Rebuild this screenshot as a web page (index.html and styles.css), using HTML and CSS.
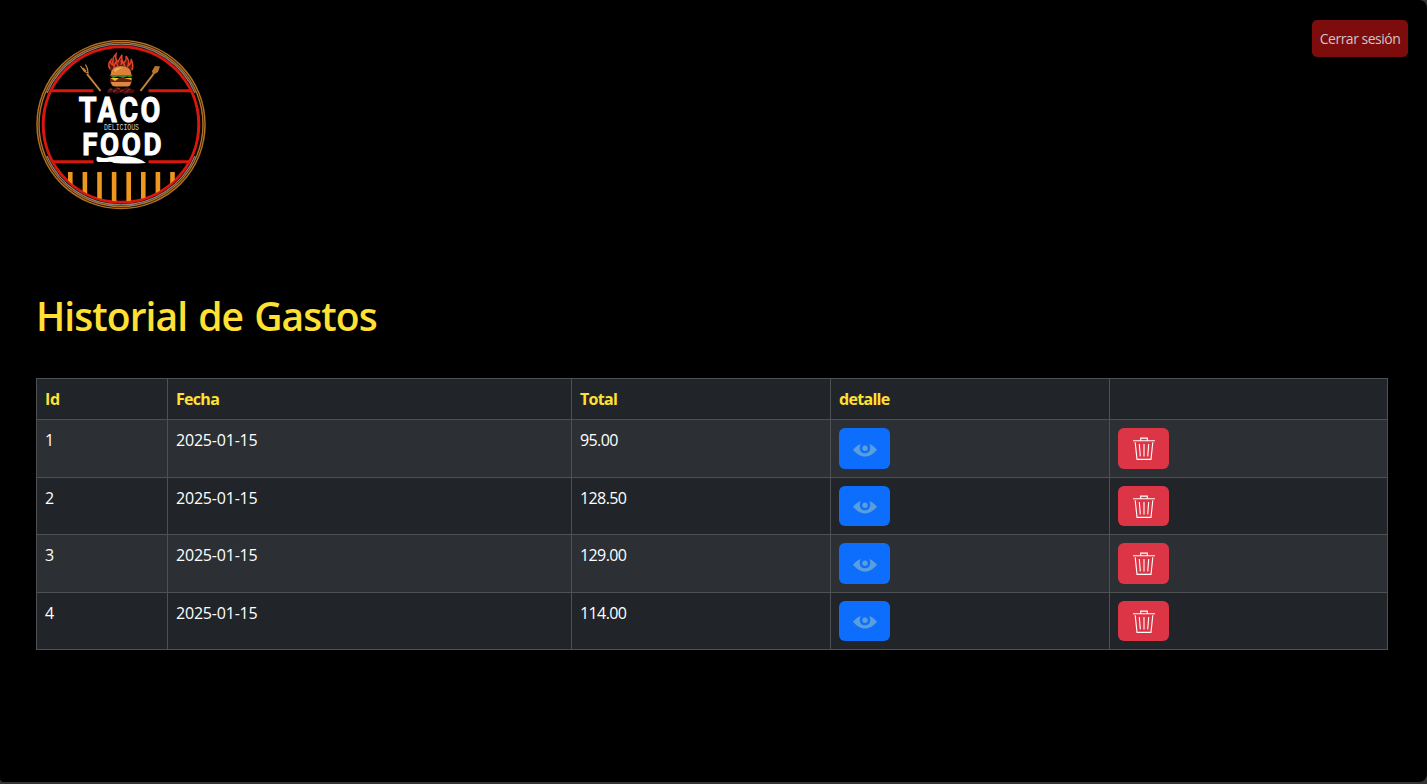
FILE: index.html
```
<!DOCTYPE html>
<html lang="es">
<head>
<meta charset="utf-8">
<title>Historial de Gastos</title>
<link rel="stylesheet" href="styles.css">
</head>
<body>
<svg class="sprite" aria-hidden="true">
  <symbol id="eye" viewBox="0 0 24 14"><path d="M0 6.700C2.500 3.800 5.500 1.700 7.700.9C5.400 5.600 7.300 10.300 12 10.300S18.600 5.600 16.300.9C18.500 1.700 21.500 3.800 24 6.700C20.500 10.800 16.500 13.500 12 13.500S3.500 10.800 0 6.700Z"/><circle cx="12" cy="5.200" r="2.700"/></symbol>
  <symbol id="trash" viewBox="0 0 22 24"><path d="M0 3.700H22M7.700 3.500V1.100H14.300V3.500M2.200 5.300L4 22.400H18L19.800 5.300M6.300 7L7.300 19.400M11 7V19.400M15.700 7L14.700 19.400"/></symbol>
</svg>
<div class="page">
  <header class="top">
    <svg class="logo" viewBox="0 0 170 170" role="img" aria-label="Taco Food">
      <defs><clipPath id="disc"><circle cx="85" cy="84.500" r="77"/></clipPath></defs>
      <g fill="none">
        <circle cx="85" cy="84.500" r="84" stroke="#b06f22" stroke-width="1.500"/>
        <circle cx="85" cy="84.500" r="82" stroke="#b06f22" stroke-width="1.500"/>
        <path d="M11 53A80.400 80.400 0 0 1 159 53M11 116A80.400 80.400 0 0 0 159 116" stroke="#85807e" stroke-width="1.300"/>
        <circle cx="85" cy="84.500" r="77.800" stroke="#d8180c" stroke-width="3"/>
        <path d="M15 50.700H57.500M112.500 50.700H155M16 121.700H57.500M112.500 121.700H154" stroke="#d8180c" stroke-width="2.900"/>
      </g>
      <path class="bars" clip-path="url(#disc)" d="M34.300 132V168M48.900 132V168M63.500 132V168M78.100 132V168M92.700 132V168M107.300 132V168M121.900 132V168M136.500 132V168"/>
      <path fill="#5a1a12" d="M74 31L73 24L76 22L80 17L83 22L86 17L88 23L91 19L93 24L97 23L96 31Z"/>
      <path fill="none" stroke="#e0452a" stroke-width="1.500" d="M74 29Q71 24 75 20Q74 24 77 25Q76 18 80 14Q79 20 82 22Q84 18 86 15Q85 21 88 23Q91 19 90 16Q94 21 92 26Q96 23 95 19Q98 25 96 30M78 28Q78 24 80 22L82 26M85 25Q86 23 85 20L89 26"/>
      <path fill="#dc8135" d="M74.500 35Q75 26 85 26T95.500 35Z"/>
      <path fill="#efad5e" d="M78 30Q82 26.500 88 28Q84 28 79 32Z"/>
      <path fill="#318a38" d="M73.500 35H96.500L95 37.500L91 36.500L87 38L82 36.500L77 38Z"/>
      <path fill="#682010" d="M74 38H96V43H74Z"/>
      <path fill="#f2bd35" d="M74.500 38H83L79 41ZM88 38H95.500V40Z"/>
      <path fill="#d98a40" d="M75 42H95Q95 46.500 91 46.500H79Q75 46 75 42Z"/>
      <path fill="#481010" d="M71 51L74 48L78 49L81 47L86 49L92 47L95 49L99 50L97 53H93L89 54L85 52L80 54L77 52L72 53Z"/>
      <path fill="none" stroke="#b52a20" stroke-width="1" d="M73 50L76 49M77 52L80 50M84 52L87 50M90 52L94 49M81 48L84 49"/>
      <g fill="none" stroke="#c88639">
        <path d="M51 34L64.500 51" stroke-width="2"/><path d="M44.500 26L48.500 31.500L52 33L51.500 29L49.500 24.500M47 28L50 31" stroke-width="1.200"/>
        <path d="M104.500 51L117.500 34" stroke-width="2"/>
      </g>
      <path fill="#b87530" d="M116 31L119 26L124 26.500L122 32L117 35Z"/>
      <g class="word">
        <text x="42.800" y="82" font-size="34.500" textLength="84" lengthAdjust="spacingAndGlyphs">TACO</text>
        <text x="46.200" y="114.700" font-size="31.500" textLength="82" lengthAdjust="spacingAndGlyphs">FOOD</text>
      </g>
      <text class="tag" x="68" y="90.300" textLength="35" lengthAdjust="spacingAndGlyphs">DELICIOUS</text>
      <path fill="#fff" d="M60.500 119Q60 116 63 117Q68 119 74 117L81 116Q101 115 110 123Q94 124 78 123Q75 121 71 122L62 122Q60 121 60.500 119Z"/>
    </svg>
    <button class="logout">Cerrar sesión</button>
  </header>
  <main>
    <h1>Historial de Gastos</h1>
    <table>
      <colgroup><col class="c-id"><col class="c-date"><col class="c-total"><col class="c-detail"><col></colgroup>
      <thead><tr><th>Id</th><th>Fecha</th><th>Total</th><th>detalle</th><th></th></tr></thead>
      <tbody>
        <tr><td>1</td><td>2025-01-15</td><td class="total">95.00</td><td><button class="btn view"><svg><use href="#eye"/></svg></button></td><td><button class="btn del"><svg><use href="#trash"/></svg></button></td></tr>
        <tr><td>2</td><td>2025-01-15</td><td class="total">128.50</td><td><button class="btn view"><svg><use href="#eye"/></svg></button></td><td><button class="btn del"><svg><use href="#trash"/></svg></button></td></tr>
        <tr><td>3</td><td>2025-01-15</td><td class="total">129.00</td><td><button class="btn view"><svg><use href="#eye"/></svg></button></td><td><button class="btn del"><svg><use href="#trash"/></svg></button></td></tr>
        <tr><td>4</td><td>2025-01-15</td><td class="total">114.00</td><td><button class="btn view"><svg><use href="#eye"/></svg></button></td><td><button class="btn del"><svg><use href="#trash"/></svg></button></td></tr>
      </tbody>
    </table>
  </main>
</div>
</body>
</html>
```
FILE: styles.css
```
* { box-sizing: border-box; }
body { margin: 0; background: #353333; font-family: "Open Sans", "Noto Sans", sans-serif; color: #fff; overflow: hidden; }
.sprite { display: none; }
.page { height: 782px; background: #000; border-radius: 0 8px 8px 4px; padding: 20px 19px 0 36px; }
.top { display: flex; justify-content: space-between; align-items: flex-start; height: 276px; }
.logo { width: 170px; height: 170px; margin-top: 20px; }
.bars { stroke: #ee971e; stroke-width: 4.6; }
.word { font-family: Roboto, sans-serif; font-weight: 700; fill: #fff; stroke: #fff; stroke-width: 1; letter-spacing: 3px; }
.tag { font: 8.500px "Liberation Mono", monospace; fill: #ccc; }
.logout { width: 96px; height: 37px; padding: 0; border: 0; border-radius: 5px; background: #7d0c0c; color: #d0c4c4; font: 14px "Open Sans", sans-serif; letter-spacing: -0.5px; white-space: nowrap; }
h1 { margin: 0; height: 82px; font-size: 39px; line-height: 40px; font-weight: 600; color: #ffe033; letter-spacing: -0.95px; word-spacing: 2px; }
table { width: 1352px; table-layout: fixed; border-collapse: separate; border-spacing: 1px; background: #4d5154; font-size: 16px; line-height: 24px; }
.c-id { width: 130px; }
.c-date { width: 403px; }
.c-total { width: 258px; }
.c-detail { width: 278px; }
th, td { padding: 8px; text-align: left; vertical-align: top; background: #212529; }
th { height: 40px; font-weight: 700; color: #ffe033; letter-spacing: -0.7px; }
th:first-child { letter-spacing: -0.3px; }
td { height: 56px; letter-spacing: -0.2px; }
.total { letter-spacing: -0.6px; }
tbody tr:nth-child(odd) td { height: 57px; background: #2c3034; }
.btn { display: flex; align-items: center; justify-content: center; width: 51px; height: 40px; padding: 0; border: 0; border-radius: 6px; }
tr:nth-child(odd) .btn { height: 41px; }
.view { background: #0d6efd; }
.view svg { width: 24px; height: 14px; margin: 2px 0 0 0; fill: #5a9fdc; }
.del { background: #dc3545; }
.del svg { width: 22px; height: 24px; margin: 1px 0 0 0; fill: none; stroke: #fff; stroke-width: 1.1; }
```
